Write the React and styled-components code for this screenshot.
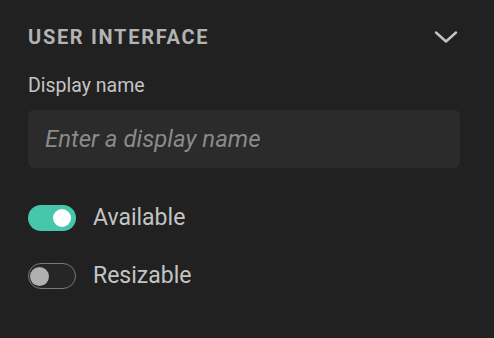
import React from "react";
import styled, { createGlobalStyle } from "styled-components";

const Global = createGlobalStyle`
  html, body { margin: 0; padding: 0; background: #212121; }
  body { font-family: Roboto, "Noto Sans", sans-serif; }
`;

const Panel = styled.div`
  width: 494px;
  height: 338px;
  box-sizing: border-box;
  background: #212121;
  padding: 25px 34px 0 28px;
  display: flex;
  flex-direction: column;
`;

const Header = styled.div`
  display: flex;
  align-items: center;
  justify-content: space-between;
  height: 24px;
`;

const Title = styled.h2`
  margin: 0;
  font-size: 20px;
  line-height: 24px;
  font-weight: 700;
  letter-spacing: 1.7px;
  color: #b3b3b3;
  text-transform: uppercase;
`;

const Chevron = styled.svg`
  width: 24px;
  height: 24px;
  margin-right: 2px;
`;

const Label = styled.label`
  margin-top: 25px;
  font-size: 19.5px;
  line-height: 24px;
  color: #c4c4c4;
`;

const Input = styled.input`
  margin-top: 12px;
  height: 58px;
  box-sizing: border-box;
  border: none;
  outline: none;
  border-radius: 6px;
  background: #2b2b2b;
  padding: 0 17px;
  font-family: Roboto, sans-serif;
  font-size: 24px;
  color: #ddd;
  &::placeholder { color: #8a8a8a; font-style: italic; }
`;

const Options = styled.div`
  display: flex;
  flex-direction: column;
  gap: 32px;
  margin-top: 37px;
`;

const Row = styled.div`
  display: flex;
  align-items: center;
  gap: 17px;
  height: 26px;
`;

const Track = styled.div`
  width: 48px;
  height: 26px;
  box-sizing: border-box;
  border-radius: 13px;
  background: ${p => (p.$on ? "#47c6ab" : "#262626")};
  border: ${p => (p.$on ? "none" : "1.5px solid #7a7a7a")};
  display: flex;
  align-items: center;
  justify-content: ${p => (p.$on ? "flex-end" : "flex-start")};
  padding: ${p => (p.$on ? "0 5px" : "0 1px")};
`;

const Knob = styled.div`
  width: ${p => (p.$on ? "18px" : "19px")};
  height: ${p => (p.$on ? "18px" : "19px")};
  border-radius: 50%;
  background: ${p => (p.$on ? "#ffffff" : "#b0b0b0")};
`;

const OptionText = styled.span`
  font-size: 23px;
  line-height: 26px;
  color: #c4c4c4;
`;

function Toggle({ on, label }) {
  return (
    <Row>
      <Track $on={on}><Knob $on={on} /></Track>
      <OptionText>{label}</OptionText>
    </Row>
  );
}

export default function App() {
  return (
    <>
      <Global />
      <Panel>
        <Header>
          <Title>User Interface</Title>
          <Chevron viewBox="0 0 24 24" fill="none">
            <path d="M2 7.5 L12 16.5 L22 7.5" stroke="#c4c4c4" strokeWidth="2.4" strokeLinecap="round" strokeLinejoin="round" />
          </Chevron>
        </Header>
        <Label>Display name</Label>
        <Input placeholder="Enter a display name" />
        <Options>
          <Toggle on label="Available" />
          <Toggle label="Resizable" />
        </Options>
      </Panel>
    </>
  );
}
